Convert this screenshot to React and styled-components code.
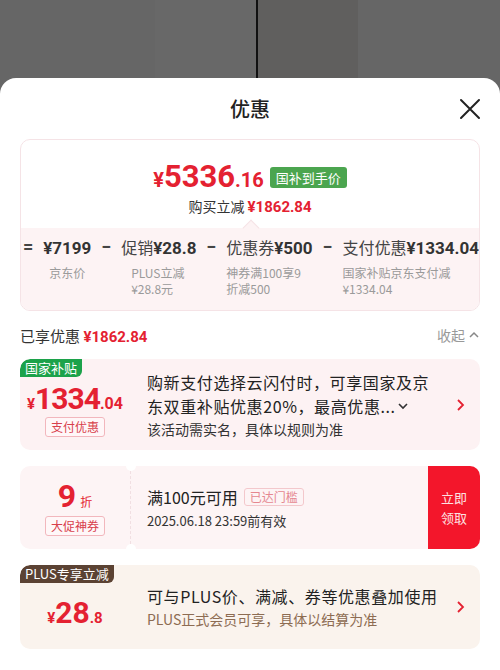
import React from 'react';
import styled, { createGlobalStyle } from 'styled-components';

const RED = '#e42131';

const GlobalStyle = createGlobalStyle`
  html, body {
    margin: 0;
    padding: 0;
    background: #666;
  }
  body {
    font-family: "Noto Sans CJK SC", "Noto Sans", sans-serif;
    color: #222;
  }
  * {
    box-sizing: border-box;
  }
`;

export default function App() {
  return (
    <>
      <GlobalStyle />
      <Backdrop>
        <Panel $w={155} $bg="#666" />
        <Panel $w={101} $bg="#686868" />
        <Divider />
        <Panel $w={100} $bg="#605f5e" />
        <Panel $w={142} $bg="#666" />
      </Backdrop>
      <Sheet>
        <Header>
          <span />
          <Title>优惠</Title>
          <CloseBtn>
            <svg width="22" height="22" viewBox="0 0 22 22">
              <path d="M2 2 L20 20 M20 2 L2 20" stroke="#222" strokeWidth="2" strokeLinecap="round" />
            </svg>
          </CloseBtn>
        </Header>

        <Summary>
          <SummaryTop>
            <PriceLine>
              <Yen $size={20}>¥</Yen>
              <Num $size={31}>5336</Num>
              <Num $size={20}>.16</Num>
              <GreenTag>国补到手价</GreenTag>
            </PriceLine>
            <BuyLine>
              购买立减 <RedNum $size={15}>¥1862.84</RedNum>
            </BuyLine>
          </SummaryTop>
          <Breakdown>
            <Op>=</Op>
            <Item $center>
              <ItemValue><Amount>¥7199</Amount></ItemValue>
              <ItemSub>京东价</ItemSub>
            </Item>
            <Op>−</Op>
            <Item>
              <ItemValue>促销<Amount>¥28.8</Amount></ItemValue>
              <ItemSub $indent={10}>PLUS立减<br />¥28.8元</ItemSub>
            </Item>
            <Op>−</Op>
            <Item>
              <ItemValue>优惠券<Amount>¥500</Amount></ItemValue>
              <ItemSub>神券满100享9<br />折减500</ItemSub>
            </Item>
            <Op>−</Op>
            <Item>
              <ItemValue>支付优惠<Amount>¥1334.04</Amount></ItemValue>
              <ItemSub>国家补贴京东支付减<br />¥1334.04</ItemSub>
            </Item>
          </Breakdown>
        </Summary>

        <SavedRow>
          <SavedLabel>
            已享优惠 <RedNum $size={15}>¥1862.84</RedNum>
          </SavedLabel>
          <Collapse>
            收起
            <svg width="12" height="12" viewBox="0 0 12 12">
              <path d="M2 8 L6 4 L10 8" fill="none" stroke="#888" strokeWidth="1.5" />
            </svg>
          </Collapse>
        </SavedRow>

        <OfferCard $bg="#fdf2f3" $h={91}>
          <Ribbon $bg="#1ca24a">国家补贴</Ribbon>
          <LeftCol>
            <PriceLine>
              <Yen $size={15}>¥</Yen>
              <Num $size={30} $tight>1334</Num>
              <Num $size={16}>.04</Num>
            </PriceLine>
            <OutlineTag>支付优惠</OutlineTag>
          </LeftCol>
          <Body>
            <MainText>购新支付选择云闪付时，可享国家及京</MainText>
            <MainText>
              东双重补贴优惠20%，最高优惠...
              <svg width="14" height="12" viewBox="0 0 14 12">
                <path d="M3 4 L7 8 L11 4" fill="none" stroke="#333" strokeWidth="1.6" />
              </svg>
            </MainText>
            <SubText>该活动需实名，具体以规则为准</SubText>
          </Body>
          <Arrow />
        </OfferCard>

        <OfferCard $bg="#fdf4f5" $h={83}>
          <Stub>
            <Discount>
              <Num $size={32}>9</Num>
              <Unit>折</Unit>
            </Discount>
            <OutlineTag>大促神券</OutlineTag>
          </Stub>
          <CouponBody>
            <CouponTitle>
              满100元可用<SoftTag>已达门槛</SoftTag>
            </CouponTitle>
            <CouponDate>2025.06.18 23:59前有效</CouponDate>
          </CouponBody>
          <ClaimBtn>
            <span>立即</span>
            <span>领取</span>
          </ClaimBtn>
        </OfferCard>

        <OfferCard $bg="#faf3ed" $h={84}>
          <Ribbon $bg="#5b4233">PLUS专享立减</Ribbon>
          <LeftCol>
            <PriceLine>
              <Yen $size={15}>¥</Yen>
              <Num $size={30}>28</Num>
              <Num $size={15}>.8</Num>
            </PriceLine>
          </LeftCol>
          <Body>
            <MainText>可与PLUS价、满减、券等优惠叠加使用</MainText>
            <SubText $color="#8d6c52">PLUS正式会员可享，具体以结算为准</SubText>
          </Body>
          <Arrow />
        </OfferCard>
      </Sheet>
    </>
  );
}

function Arrow() {
  return (
    <ArrowWrap>
      <svg width="10" height="14" viewBox="0 0 10 14">
        <path d="M3 2 L8 7 L3 12" fill="none" stroke={RED} strokeWidth="1.8" />
      </svg>
    </ArrowWrap>
  );
}

//styling...

const Backdrop = styled.div`
  display: flex;
  height: 78px;
`;

const Panel = styled.div`
  width: ${p => p.$w}px;
  background: ${p => p.$bg};
`;

const Divider = styled.div`
  width: 2px;
  background: #111;
`;

const Sheet = styled.div`
  background: #fff;
  border-radius: 16px 16px 0 0;
  padding: 0 20px;
  height: 592px;
  overflow: hidden;
`;

const Header = styled.div`
  display: grid;
  grid-template-columns: 1fr auto 1fr;
  align-items: center;
  height: 61px;
`;

const Title = styled.div`
  font-size: 20px;
  font-weight: 500;
  color: #222;
`;

const CloseBtn = styled.div`
  justify-self: end;
  display: flex;
  margin-right: -1px;
`;

const Summary = styled.div`
  border: 1px solid #f5e3e6;
  border-radius: 10px;
  overflow: hidden;
`;

const SummaryTop = styled.div`
  height: 88px;
  display: flex;
  flex-direction: column;
  align-items: center;
  padding-top: 20px;
`;

const PriceLine = styled.div`
  display: flex;
  align-items: baseline;
  color: ${RED};
`;

const Yen = styled.span`
  font-family: Roboto, "Noto Sans", sans-serif;
  font-weight: 700;
  font-size: ${p => p.$size}px;
`;

const Num = styled.span`
  font-family: Roboto, "Noto Sans", sans-serif;
  font-weight: 700;
  font-size: ${p => p.$size}px;
  line-height: 1.1;
  letter-spacing: ${p => (p.$tight ? '-1px' : '0')};
`;

const GreenTag = styled.span`
  align-self: center;
  margin-left: 6px;
  background: #4ba54f;
  color: #fff;
  font-size: 13px;
  line-height: 21px;
  padding: 0 6px;
  border-radius: 3px;
`;

const BuyLine = styled.div`
  margin-top: 2px;
  font-size: 14px;
  color: #333;
`;

const RedNum = styled.span`
  font-family: Roboto, "Noto Sans", sans-serif;
  font-weight: 700;
  color: ${RED};
  font-size: ${p => p.$size}px;
`;

const Breakdown = styled.div`
  position: relative;
  height: 82px;
  background: #fdf3f4;
  display: flex;
  justify-content: space-between;
  align-items: flex-start;
  padding: 7px 0 0 2px;

  &::before {
    content: '';
    position: absolute;
    top: -6px;
    left: 224px;
    width: 11px;
    height: 11px;
    background: #fdf3f4;
    border-top: 1px solid #f5e3e6;
    border-left: 1px solid #f5e3e6;
    transform: rotate(45deg);
  }
`;

const Op = styled.div`
  font-family: Roboto, "Noto Sans", sans-serif;
  font-size: 18px;
  font-weight: 700;
  color: #444;
  line-height: 24px;
`;

const Item = styled.div`
  display: flex;
  flex-direction: column;
  align-items: ${p => (p.$center ? 'center' : 'flex-start')};
`;

const ItemValue = styled.div`
  font-size: 16px;
  color: #444;
  line-height: 24px;
  white-space: nowrap;
`;

const Amount = styled.span`
  font-family: Roboto, "Noto Sans", sans-serif;
  font-weight: 700;
  font-size: 17px;
  color: #333;
`;

const ItemSub = styled.div`
  margin-top: 5px;
  padding-left: ${p => p.$indent || 0}px;
  font-size: 12px;
  line-height: 16px;
  color: #9a9a9a;
  white-space: nowrap;
`;

const SavedRow = styled.div`
  height: 48px;
  display: flex;
  align-items: center;
  justify-content: space-between;
`;

const SavedLabel = styled.div`
  font-size: 15px;
  color: #333;
`;

const Collapse = styled.div`
  display: flex;
  align-items: center;
  gap: 3px;
  font-size: 14px;
  color: #999;
`;

const OfferCard = styled.div`
  position: relative;
  display: flex;
  height: ${p => p.$h}px;
  background: ${p => p.$bg};
  border-radius: 10px;
  margin-bottom: 16px;
  overflow: hidden;
`;

const Ribbon = styled.div`
  position: absolute;
  top: 0;
  left: 0;
  background: ${p => p.$bg};
  color: #fff;
  font-size: 13px;
  line-height: 18px;
  padding: 0 5px;
  border-radius: 10px 0 6px 0;
`;

const LeftCol = styled.div`
  width: 110px;
  flex-shrink: 0;
  display: flex;
  flex-direction: column;
  align-items: center;
  justify-content: center;
  padding-top: 10px;
`;

const OutlineTag = styled.span`
  margin-top: 2px;
  border: 1px solid #f2b7bd;
  border-radius: 3px;
  background: #fff7f8;
  color: #d8404c;
  font-size: 12px;
  line-height: 18px;
  padding: 0 5px;
`;

const Body = styled.div`
  flex: 1;
  display: flex;
  flex-direction: column;
  justify-content: center;
  padding-left: 17px;
`;

const MainText = styled.div`
  display: flex;
  align-items: center;
  font-size: 16px;
  letter-spacing: 0.6px;
  line-height: 24px;
  color: #222;
  white-space: nowrap;
`;

const SubText = styled.div`
  font-size: 14px;
  line-height: 22px;
  color: ${p => p.$color || '#333'};
  white-space: nowrap;
`;

const ArrowWrap = styled.div`
  width: 40px;
  display: flex;
  align-items: center;
  justify-content: center;
`;

const Stub = styled.div`
  position: relative;
  width: 111px;
  flex-shrink: 0;
  display: flex;
  flex-direction: column;
  align-items: center;
  justify-content: center;
  border-right: 1px dashed #f1dfe2;

  &::before,
  &::after {
    content: '';
    position: absolute;
    right: -6px;
    width: 10px;
    height: 10px;
    border-radius: 50%;
    background: #fff;
  }
  &::before {
    top: -5px;
  }
  &::after {
    bottom: -5px;
  }
`;

const Discount = styled.div`
  display: flex;
  align-items: baseline;
  gap: 4px;
  color: ${RED};
`;

const Unit = styled.span`
  font-size: 12px;
`;

const CouponBody = styled.div`
  flex: 1;
  display: flex;
  flex-direction: column;
  justify-content: center;
  padding-left: 16px;
`;

const CouponTitle = styled.div`
  display: flex;
  align-items: center;
  font-size: 16px;
  line-height: 26px;
  color: #222;
`;

const SoftTag = styled.span`
  margin-left: 6px;
  border: 1px solid #f3c8cc;
  border-radius: 3px;
  color: #e58790;
  font-size: 12px;
  line-height: 16px;
  padding: 0 5px;
`;

const CouponDate = styled.div`
  font-size: 13px;
  line-height: 22px;
  color: #333;
`;

const ClaimBtn = styled.div`
  width: 52px;
  flex-shrink: 0;
  background: #f3162b;
  color: #fde2e2;
  font-size: 13px;
  line-height: 20px;
  display: flex;
  flex-direction: column;
  align-items: center;
  justify-content: center;
`;
